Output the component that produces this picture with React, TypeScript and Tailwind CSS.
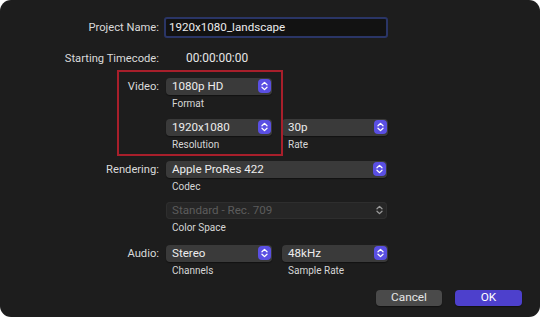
import React from "react";

const font = { fontFamily: "Roboto, 'Noto Sans', 'Liberation Sans', sans-serif" };

function Stepper({ disabled }: { disabled?: boolean }) {
  return (
    <div
      className={
        "flex h-[14px] w-[13px] items-center justify-center rounded-[4px] " +
        (disabled ? "bg-transparent" : "bg-[#5a4fe3]")
      }
    >
      <svg width="7" height="10" viewBox="0 0 7 10" fill="none">
        <path
          d="M1 3.8 L3.5 1.4 L6 3.8 M1 6.2 L3.5 8.6 L6 6.2"
          stroke={disabled ? "#9a9a9a" : "#ffffff"}
          strokeWidth="1.3"
          strokeLinecap="round"
          strokeLinejoin="round"
        />
      </svg>
    </div>
  );
}

function Popup({ value, wide, disabled }: { value: string; wide?: boolean; disabled?: boolean }) {
  return (
    <div
      className={
        "flex h-[17px] items-center justify-between rounded-[4px] pl-[6px] pr-[1px] " +
        (wide ? "w-[221px] " : "w-[106px] ") +
        (disabled ? "bg-[#262626] shadow-[inset_0_0_0_1px_#2e2e2e]" : "bg-[#3a3a3a] shadow-[0_1px_1px_rgba(0,0,0,0.4)]")
      }
    >
      <span
        className={
          "text-[11.6px] leading-none " + (disabled ? "text-[#5c5c5c]" : "text-[#ededed]")
        }
      >
        {value}
      </span>
      <Stepper disabled={disabled} />
    </div>
  );
}

function Sub({ children }: { children: React.ReactNode }) {
  return <div className="mt-[2px] h-[14px] pl-[6px] text-[10px] leading-[14px] text-[#d6d6d6]">{children}</div>;
}

function Row({ label, children }: { label?: string; children: React.ReactNode }) {
  return (
    <div className="flex">
      <div className="w-[159px] pt-[1px] text-right text-[11.2px] leading-[16px] text-[#dadada]">{label}</div>
      <div className="ml-[7px]">{children}</div>
    </div>
  );
}

export default function App() {
  return (
    <div className="h-[317px] w-[540px] bg-white" style={font}>
      <div className="relative h-full w-full rounded-[11px] bg-[#1d1d1d]">
        <div className="flex flex-col pt-[17px]">
          <div className="flex items-center">
            <div className="w-[159px] pt-[1px] text-right text-[11.2px] text-[#dadada]">Project Name:</div>
            <div className="ml-[5px] flex h-[21px] w-[224px] items-center rounded-[3px] border-[2px] border-[#2a3566] bg-[#121212] pl-[3px] pt-[1px] text-[11.6px] text-[#ededed]">
              1920x1080_landscape
            </div>
          </div>
          <div className="mt-[12px] flex items-center">
            <div className="w-[159px] text-right text-[11.2px] text-[#dadada]">Starting Timecode:</div>
            <div className="ml-[27px] text-[11.9px] text-[#e6e6e6]">00:00:00:00</div>
          </div>

          <div className="mt-[10px]">
            <Row label="Video:">
              <Popup value="1080p HD" />
              <Sub>Format</Sub>
            </Row>
          </div>
          <div className="mt-[8px]">
            <Row>
              <div className="flex gap-[10px]">
                <div>
                  <Popup value="1920x1080" />
                  <Sub>Resolution</Sub>
                </div>
                <div>
                  <Popup value="30p" />
                  <Sub>Rate</Sub>
                </div>
              </div>
            </Row>
          </div>
          <div className="mt-[9px]">
            <Row label="Rendering:">
              <Popup value="Apple ProRes 422" wide />
              <Sub>Codec</Sub>
            </Row>
          </div>
          <div className="mt-[8px]">
            <Row>
              <Popup value="Standard - Rec. 709" wide disabled />
              <Sub>Color Space</Sub>
            </Row>
          </div>
          <div className="mt-[10px]">
            <Row label="Audio:">
              <div className="flex gap-[10px]">
                <div>
                  <Popup value="Stereo" />
                  <Sub>Channels</Sub>
                </div>
                <div>
                  <Popup value="48kHz" />
                  <Sub>Sample Rate</Sub>
                </div>
              </div>
            </Row>
          </div>

          <div className="mt-[12px] flex justify-end gap-[13px] pr-[18px]">
            <button className="h-[16px] w-[66px] rounded-[4px] bg-[#4a4a4a] text-[11.8px] leading-none text-[#e6e6e6] shadow-[0_1px_1px_rgba(0,0,0,0.4)]">
              Cancel
            </button>
            <button className="h-[16px] w-[67px] rounded-[4px] bg-[#4d40cc] text-[11.8px] leading-none text-white shadow-[0_1px_1px_rgba(0,0,0,0.4)]">
              OK
            </button>
          </div>
        </div>

        <div className="pointer-events-none absolute left-[117px] top-[70px] h-[86px] w-[166px] border-[2px] border-[#a81f2b]" />
      </div>
    </div>
  );
}
